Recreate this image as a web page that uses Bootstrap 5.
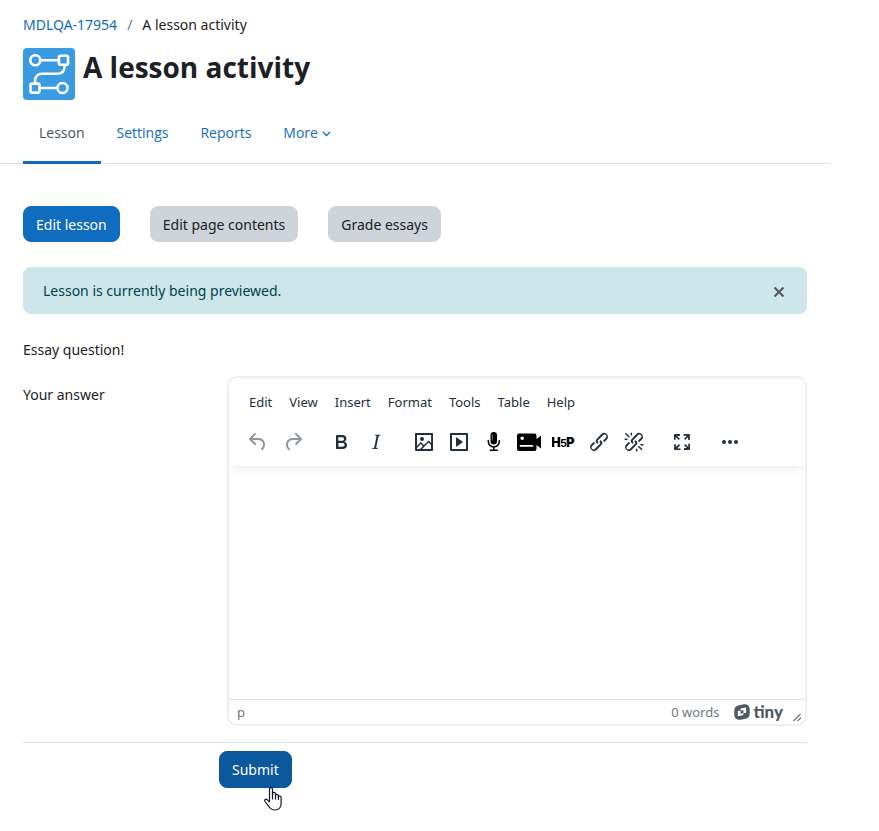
<!DOCTYPE html>
<html lang="en">
<head>
<meta charset="utf-8">
<meta name="viewport" content="width=device-width, initial-scale=1">
<title>A lesson activity</title>
<link href="https://cdn.jsdelivr.net/npm/bootstrap@5.3.0/dist/css/bootstrap.min.css" rel="stylesheet">
<style>
  body { font-family: "Noto Sans", "Open Sans", sans-serif; font-size: 14px; line-height: 22px; color: #1d2125; }
  a { color: #0f6cbf; text-decoration: none; }
  .page { padding-right: 49px; }
  .inset { padding: 0 23px; }
  .breadcrumb { --bs-breadcrumb-divider-color: #6a737b; --bs-breadcrumb-item-active-color: #1d2125; --bs-breadcrumb-item-padding-x: 10px; padding-top: 14px; margin-bottom: 12px; }
  .activity-icon { width: 52px; height: 52px; }
  .page-title { font-family: "Open Sans", sans-serif; font-size: 28px; line-height: 38px; font-weight: 700; margin: 0 0 0 8px; }
  .tabs { border-bottom: 1px solid #dee2e6; }
  .tabs .nav-link { font-family: "Open Sans", sans-serif; color: #0f6cbf; padding: 22px 16px 17px; border-bottom: 3px solid transparent; margin-bottom: -1px; }
  .tabs .nav-link.active { color: #495057; border-bottom-color: #0f6cbf; }
  .chevron { width: 9px; height: 9px; }
  .btn { font-size: 14px; line-height: 22px; padding: 7px 12px 5px; border-radius: 8px; }
  .btn-primary { --bs-btn-bg: #0f6cbf; --bs-btn-border-color: #0f6cbf; }
  .btn-secondary { --bs-btn-bg: #ced4da; --bs-btn-border-color: #ced4da; --bs-btn-color: #1d2125; }
  .btn-submit { --bs-btn-bg: #0c589c; --bs-btn-border-color: #0c589c; padding-bottom: 6px; }
  .actions { gap: 30px; padding-top: 42px; }
  .notice { background: #cce6ea; color: #00434e; border: 0; border-radius: 8px; padding: 12px 20px; margin: 25px 0 0; line-height: 23px; }
  .notice-close { border: 0; background: none; padding: 0; margin: 3px 2px 0 0; width: 12px; height: 12px; line-height: 0; color: #525d60; }
  .question { margin: 25px 0 0; }
  .answer { margin-top: 15px; }
  .answer-label { width: 204px; padding-top: 8px; }
  .editor { border: 2px solid #eee; border-radius: 10px; overflow: hidden; min-width: 0; }
  .menus { padding: 13px 12px 0; gap: 1px; font-size: 13px; line-height: 22px; }
  .menus button { border: 0; background: none; padding: 0 8px; color: #222f3e; }
  .editor-head { position: relative; padding-bottom: 10px; box-shadow: 0 2px 2px -2px rgba(34,47,62,.1), 0 8px 8px -4px rgba(34,47,62,.07); }
  .tools { margin-top: 15px; }
  .tool-group { padding: 0 2px 0 12px; gap: 1px; }
  .tool { width: 34px; height: 28px; border: 0; padding: 0; background: none; color: #222f3e; display: flex; align-items: center; justify-content: center; }
  .tool:disabled { color: rgba(34,47,62,.5); }
  .tool svg { width: 24px; height: 24px; fill: currentColor; }
  .h5p { font-family: "Inter", sans-serif; font-weight: 900; }
  .writing { border: 0; width: 100%; height: 233px; resize: none; outline: 0; padding: 12px; }
  .statusbar { border-top: 1px solid #e3e3e3; font-size: 13px; line-height: 26px; height: 25px; padding: 0 1px 0 8px; color: #6f7882; }
  .tiny-brand { margin: 0 9px 0 15px; gap: 3px; }
  .tiny-name { font-family: "Lato", sans-serif; font-weight: 900; font-size: 17px; line-height: 20px; color: #4e5965; }
  .rule { border: 0; border-top: 1px solid #dee2e6; opacity: 1; margin: 16px 0 8px; }
  .submit-row { padding: 0 0 40px 196px; }
  .pointer { position: absolute; left: 45px; top: 35px; width: 20px; height: 26px; pointer-events: none; z-index: 1; }
</style>
<script src="https://cdn.jsdelivr.net/npm/bootstrap@5.3.0/dist/js/bootstrap.bundle.min.js"></script>
</head>
<body>
<div class="page">
  <header>
    <div class="inset">
      <nav aria-label="breadcrumb">
        <ol class="breadcrumb">
          <li class="breadcrumb-item"><a href="#">MDLQA-17954</a></li>
          <li class="breadcrumb-item active" aria-current="page">A lesson activity</li>
        </ol>
      </nav>
      <div class="d-flex align-items-start">
        <svg class="activity-icon" viewBox="0 0 52 52" aria-hidden="true">
          <rect width="52" height="52" rx="4" fill="#399be2"/>
          <g fill="none" stroke="#fff" stroke-width="2.6">
            <circle cx="12.300" cy="12.200" r="5"/><rect x="36" y="7.800" width="9" height="9" rx="1.500"/>
            <rect x="7.500" y="35.600" width="9" height="9" rx="1.500"/><circle cx="39.500" cy="40" r="5"/>
            <path d="M17.500 12.200H36M16.500 40H34.500M41.500 17v1.500c0 5-3 7.300-7.500 7.300H19c-4.500 0-7 3-7 7.500v2"/>
          </g>
        </svg>
        <h1 class="page-title">A lesson activity</h1>
      </div>
    </div>
    <nav class="tabs inset" aria-label="Activity">
      <ul class="nav">
        <li class="nav-item"><a class="nav-link active" aria-current="page" href="#">Lesson</a></li>
        <li class="nav-item"><a class="nav-link" href="#">Settings</a></li>
        <li class="nav-item"><a class="nav-link" href="#">Reports</a></li>
        <li class="nav-item"><a class="nav-link" href="#">More <svg class="chevron" viewBox="0 0 9 9" fill="none" stroke="currentColor" stroke-width="1.300" aria-hidden="true"><path d="M1 2l3.500 3.500L8 2"/></svg></a></li>
      </ul>
    </nav>
  </header>
  <main class="inset">
    <div class="actions d-flex flex-wrap">
      <button type="button" class="btn btn-primary">Edit lesson</button>
      <button type="button" class="btn btn-secondary">Edit page contents</button>
      <button type="button" class="btn btn-secondary">Grade essays</button>
    </div>
    <div class="alert notice d-flex justify-content-between align-items-center" role="alert">
      <span>Lesson is currently being previewed.</span>
      <button type="button" class="notice-close" data-bs-dismiss="alert" aria-label="Close"><svg width="12" height="12" viewBox="0 0 12 12" stroke="currentColor" stroke-width="2.200" aria-hidden="true"><path d="M1.500 1.500l9 9M10.500 1.500l-9 9"/></svg></button>
    </div>
    <p class="question">Essay question!</p>
    <form>
      <div class="answer d-flex">
        <label class="answer-label flex-shrink-0" for="answer">Your answer</label>
        <div class="editor flex-grow-1">
          <div class="editor-head">
            <div class="menus d-flex">
              <button type="button">Edit</button><button type="button">View</button><button type="button">Insert</button><button type="button">Format</button><button type="button">Tools</button><button type="button">Table</button><button type="button">Help</button>
            </div>
            <div class="tools d-flex">
              <div class="tool-group d-flex">
                <button type="button" class="tool" disabled aria-label="Undo"><svg viewBox="0 0 24 24"><path d="M6.4 8H12c3.7 0 6.2 2 6.800 5.100.6 2.700-.4 5.600-2.300 6.800a1 1 0 0 1-1-1.800c1.100-.6 1.800-2.700 1.400-4.600-.5-2.100-2.100-3.500-4.900-3.500H6.400l3.300 3.300a1 1 0 1 1-1.400 1.400l-5-5a1 1 0 0 1 0-1.400l5-5a1 1 0 0 1 1.400 1.400L6.400 8Z"/></svg></button>
                <button type="button" class="tool" disabled aria-label="Redo"><svg viewBox="0 0 24 24"><path d="M17.600 10H12c-2.800 0-4.400 1.400-4.900 3.500-.4 2 .3 4 1.400 4.600a1 1 0 1 1-1 1.800c-2-1.200-2.900-4.100-2.300-6.800.6-3 3-5.100 6.800-5.100h5.600l-3.300-3.300a1 1 0 1 1 1.400-1.400l5 5a1 1 0 0 1 0 1.400l-5 5a1 1 0 0 1-1.400-1.400l3.300-3.300Z"/></svg></button>
              </div>
              <div class="tool-group d-flex">
                <button type="button" class="tool" aria-label="Bold"><svg viewBox="0 0 24 24"><path d="M7.800 19c-.3 0-.5 0-.6-.2l-.2-.5V5.700c0-.2 0-.4.2-.5l.6-.2h5c1.500 0 2.700.3 3.500 1 .7.6 1.100 1.400 1.100 2.500a3 3 0 0 1-.6 1.900c-.4.6-1 1-1.600 1.200.4.1.9.3 1.300.6s.8.7 1 1.200c.4.4.5 1 .5 1.600 0 1.300-.4 2.300-1.300 3-.8.7-2.100 1-3.800 1H7.800Zm5-8.300c.6 0 1.200-.1 1.600-.5.4-.3.6-.7.6-1.300 0-1.100-.8-1.700-2.300-1.700H9.300v3.500h3.400Zm.5 6c.7 0 1.300-.1 1.700-.4.4-.4.6-.9.6-1.500s-.2-1-.7-1.400c-.4-.3-1-.4-2-.4H9.400v3.800h4Z" fill-rule="evenodd"/></svg></button>
                <button type="button" class="tool" aria-label="Italic"><svg viewBox="0 0 24 24"><path d="m16.700 4.700-.1.900h-.3c-.6 0-1 0-1.400.3-.3.3-.4.6-.5 1.100l-2.100 9.800v.6c0 .5.4.8 1.400.8h.2l-.2.8H8l.2-.8h.2c1.100 0 1.800-.5 2-1.500l2-9.800.1-.5c0-.6-.4-.8-1.400-.8h-.3l.2-.9h5.800Z"/></svg></button>
              </div>
              <div class="tool-group d-flex">
                <button type="button" class="tool" aria-label="Image"><svg viewBox="0 0 24 24"><path fill-rule="evenodd" d="m5 15.700 3.300-3.200c.3-.3.7-.3 1 0L12 15l4.100-4c.3-.4.8-.4 1 0l2 1.900V5H5v10.700ZM5 18V19h3l2.800-2.900-2-2L5 17.900Zm14-3-2.500-2.400-6.400 6.500H19v-4ZM4 3h16c.6 0 1 .4 1 1v16c0 .6-.4 1-1 1H4a1 1 0 0 1-1-1V4c0-.6.4-1 1-1Zm6 8a2 2 0 1 0 0-4 2 2 0 0 0 0 4Z"/></svg></button>
                <button type="button" class="tool" aria-label="Multimedia"><svg viewBox="0 0 24 24"><path fill-rule="evenodd" d="M4 3h16c.6 0 1 .4 1 1v16c0 .6-.4 1-1 1H4a1 1 0 0 1-1-1V4c0-.6.4-1 1-1Zm1 2v14h14V5H5Zm4.800 2.600 5.600 4a.5.5 0 0 1 0 .8l-5.600 4A.5.5 0 0 1 9 16V8a.5.5 0 0 1 .8-.4Z"/></svg></button>
                <button type="button" class="tool text-black" aria-label="Record audio"><svg viewBox="0 0 24 24"><rect x="8.500" y="2" width="6.500" height="12.500" rx="3.250"/><path d="M6.300 10.500v1a5.500 5.500 0 0 0 11 0v-1M11.800 17v3.200M8.300 20.300h7" fill="none" stroke="currentColor" stroke-width="1.500" stroke-linecap="round"/><path d="M10.300 4.500v6" stroke="#aaa" stroke-width=".7"/></svg></button>
                <button type="button" class="tool text-black" aria-label="Record video"><svg viewBox="0 0 24 24"><path fill-rule="evenodd" d="M2 3.500h15.500a2 2 0 0 1 2 2V9L24 5.500v13L19.500 15v4a2 2 0 0 1-2 2H2a2 2 0 0 1-2-2V5.500a2 2 0 0 1 2-2ZM5.200 6.500a1.800 1.800 0 0 0 0 3.600 1.800 1.800 0 0 0 0-3.600ZM3.500 15a.8.8 0 0 0 0 1.700h12a.8.8 0 0 0 0-1.700Z"/></svg></button>
                <button type="button" class="tool text-black" aria-label="H5P"><svg class="h5p" viewBox="0 0 24 24"><text x="-1" y="17" font-size="13">H</text><text x="14" y="17" font-size="13">P</text><text x="8" y="17" font-size="11" font-weight="700" stroke="#fff" stroke-width="1" paint-order="stroke">5</text></svg></button>
                <button type="button" class="tool" aria-label="Link"><svg viewBox="0 0 24 24"><path d="M6.200 12.300a1 1 0 0 1 1.400 1.400l-2 2a2 2 0 1 0 2.600 2.800l4.800-4.800a1 1 0 0 0 0-1.400 1 1 0 1 1 1.400-1.300 2.900 2.900 0 0 1 0 4L9.600 20a3.900 3.900 0 0 1-5.500-5.500l2-2Zm11.600-.6a1 1 0 0 1-1.400-1.400l2-2a2 2 0 1 0-2.600-2.800L11 10.300a1 1 0 0 0 0 1.400A1 1 0 1 1 9.600 13a2.900 2.900 0 0 1 0-4L14.400 4a3.900 3.900 0 0 1 5.500 5.500l-2 2Z"/></svg></button>
                <button type="button" class="tool" aria-label="Unlink"><svg viewBox="0 0 24 24"><path d="M6.200 12.300a1 1 0 0 1 1.400 1.400l-2 2a2 2 0 1 0 2.600 2.800l4.800-4.800a1 1 0 0 0 0-1.400 1 1 0 1 1 1.400-1.300 2.900 2.900 0 0 1 0 4L9.600 20a3.900 3.900 0 0 1-5.500-5.500l2-2Zm11.600-.6a1 1 0 0 1-1.400-1.400l2-2a2 2 0 1 0-2.600-2.800L11 10.300a1 1 0 0 0 0 1.400A1 1 0 1 1 9.600 13a2.900 2.900 0 0 1 0-4L14.400 4a3.900 3.900 0 0 1 5.500 5.500l-2 2ZM7.600 6.300a.8.8 0 0 1-1 1.100L3.300 4.200a.7.7 0 1 1 1-1l3.200 3.100ZM5.100 8.600a.8.8 0 0 1 0 1.500H3a.8.8 0 0 1 0-1.500H5Zm5-3.500a.8.8 0 0 1-1.500 0V3a.8.8 0 0 1 1.500 0V5Zm6 11.800a.8.8 0 0 1 1-1l3.200 3.200a.8.8 0 0 1-1 1L16 17Zm-2.200 2a.8.8 0 0 1 1.500 0V21a.8.8 0 0 1-1.500 0V19Zm5-3.500a.7.7 0 1 1 0-1.500H21a.8.8 0 0 1 0 1.500H19Z"/></svg></button>
              </div>
              <div class="tool-group d-flex">
                <button type="button" class="tool" aria-label="Fullscreen"><svg viewBox="0 0 24 24"><path d="m15.300 10-1.200-1.300 2.900-3h-2.300a.9.900 0 1 1 0-1.700H19c.5 0 .9.400.9.900v4.400a.9.900 0 1 1-1.800 0V7l-2.900 3Zm0 4 3 3v-2.300a.9.900 0 1 1 1.700 0V19c0 .5-.4.900-.9.900h-4.400a.9.900 0 1 1 0-1.800H17l-3-2.900 1.300-1.200ZM10 15.400l-2.900 3h2.300a.9.900 0 1 1 0 1.700H5a.9.900 0 0 1-.9-.9v-4.400a.9.900 0 1 1 1.800 0V17l2.900-3 1.200 1.300ZM8.700 10 5.700 7v2.300a.9.900 0 0 1-1.700 0V5c0-.5.4-.9.900-.9h4.400a.9.900 0 0 1 0 1.800H7l3 2.900-1.300 1.200Z"/></svg></button>
              </div>
              <div class="tool-group d-flex">
                <button type="button" class="tool" aria-label="More"><svg viewBox="0 0 24 24"><circle cx="6" cy="12" r="2"/><circle cx="12" cy="12" r="2"/><circle cx="18" cy="12" r="2"/></svg></button>
              </div>
            </div>
          </div>
          <textarea id="answer" class="writing d-block"></textarea>
          <div class="statusbar d-flex align-items-center">
            <span>p</span>
            <span class="ms-auto">0 words</span>
            <a href="#" class="tiny-brand d-flex align-items-center" aria-label="tiny"><svg width="16" height="16" viewBox="0 0 16 16" aria-hidden="true"><path fill="#4e5965" fill-rule="evenodd" d="M5 1.200l5-1C13.500-.3 15.700 2 15.700 5v4.500c0 3-1.200 4.700-4.200 5.300l-5 1C3 16.300.3 14 .3 11V6.500c0-3 1.700-4.700 4.700-5.300ZM6.600 4.600v1.900l-2.800.6v5.100l5.600-1.100V9.200l2.700-.5V3.500L6.600 4.600Zm0 1.900v3.300l2.800-.6V5.900l-2.800.6Z"/></svg><span class="tiny-name">tiny</span></a>
            <svg class="align-self-end" width="12" height="12" viewBox="0 0 12 12" stroke="#6f7882" stroke-width="1.200" aria-hidden="true"><path d="M1.500 9l7-7M5.500 9L9 5.500"/></svg>
          </div>
        </div>
      </div>
      <hr class="rule">
      <div class="submit-row d-flex">
        <div class="position-relative">
          <button type="submit" class="btn btn-primary btn-submit">Submit</button>
          <svg class="pointer" viewBox="0 0 20 26" aria-hidden="true"><path fill="#fff" stroke="#15152a" stroke-width="1.200" stroke-linejoin="round" d="M5.500 15.500V3.200c0-2 3-2 3 0v6.300-2c.3-1.500 2.700-1.500 3 .3v1.500c.4-1.400 2.600-1.300 2.900.3v1.200c.5-1.200 2.600-1 2.700.8v6c0 3.600-2.400 6.400-6 6.400-3 0-4.600-1-6-3.200L1 15.500c-1-1.800.8-3 2.200-1.800l2.300 2.500"/><path fill="none" stroke="#15152a" stroke-width="1.200" d="M8.500 8v5.500M11.500 9v4.500M14.400 10v4"/></svg>
        </div>
      </div>
    </form>
  </main>
</div>
</body>
</html>
